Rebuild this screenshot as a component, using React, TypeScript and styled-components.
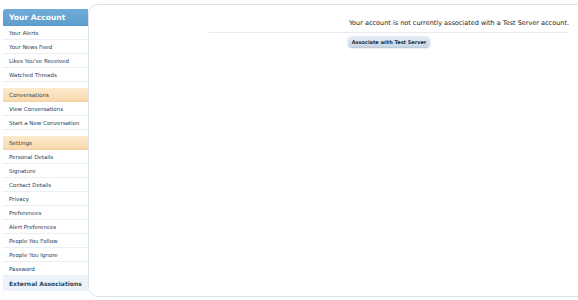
import React from 'react'
import styled, { createGlobalStyle } from 'styled-components'

const GlobalStyle = createGlobalStyle`
  html, body {
    margin: 0;
    padding: 0;
    background: #ffffff;
  }
  body {
    font-family: "DejaVu Sans", "Liberation Sans", sans-serif;
    overflow: hidden;
  }
`

const Page = styled.div`
  display: flex;
  align-items: flex-start;
  width: 578px;
  height: 300px;
  padding: 4px 0 0 3px;
  box-sizing: border-box;
`

const Sidebar = styled.nav`
  width: 85px;
  flex-shrink: 0;
  margin-top: 5px;
  display: flex;
  flex-direction: column;
`

const AccountHeader = styled.div`
  height: 17px;
  display: flex;
  align-items: center;
  padding-left: 6px;
  background: linear-gradient(#70acd8, #5c9ccc);
  border-radius: 3px 0 0 0;
  color: #ffffff;
  font-size: 7.6px;
  font-weight: bold;
  white-space: nowrap;
`

const Group = styled.div<{ $gap?: boolean }>`
  display: flex;
  flex-direction: column;
  margin-top: ${p => (p.$gap ? '6px' : '0')};
`

const SectionHeader = styled.div`
  height: 14px;
  display: flex;
  align-items: center;
  padding-left: 6px;
  background: linear-gradient(#fdebcf, #f8d9ad);
  border-bottom: 1px solid #f3d3a6;
  box-sizing: border-box;
  color: #3c3c3c;
  font-size: 5.6px;
`

const Item = styled.a`
  height: 14px;
  display: flex;
  align-items: center;
  padding-left: 6px;
  border-bottom: 1px solid #e9eff4;
  box-sizing: border-box;
  color: #22405a;
  font-size: 5.5px;
  text-decoration: none;
  white-space: nowrap;
`

const ActiveItem = styled.div`
  height: 15px;
  display: flex;
  align-items: center;
  padding-left: 6px;
  background: #edf3f8;
  color: #2b485c;
  font-size: 6px;
  font-weight: bold;
  white-space: nowrap;
`

const Panel = styled.main`
  flex: 1;
  height: 293px;
  margin-right: -12px;
  border: 1px solid #d6e4ec;
  border-radius: 10px 0 0 10px;
  background: #ffffff;
  box-sizing: border-box;
  padding: 14px 20px 0 120px;
  display: flex;
  flex-direction: column;
  align-items: stretch;
`

const Message = styled.div`
  text-align: right;
  color: #222222;
  font-size: 6.5px;
  padding-bottom: 5px;
  border-bottom: 1px solid #e4ecf2;
`

const ButtonRow = styled.div`
  display: flex;
  justify-content: center;
  padding-top: 3px;
`

const Button = styled.button`
  height: 11px;
  padding: 0 4px;
  border: none;
  border-radius: 4px;
  background: linear-gradient(#e6eef6, #c7d7e7);
  box-shadow: 0 1px 1.5px rgba(80, 110, 140, 0.45);
  color: #1e2c38;
  font-family: "DejaVu Sans", "Liberation Sans", sans-serif;
  font-size: 5px;
  font-weight: bold;
  cursor: pointer;
`

const account = ['Your Alerts', 'Your News Feed', "Likes You've Received", 'Watched Threads']
const conversations = ['View Conversations', 'Start a New Conversation']
const settings = [
  'Personal Details',
  'Signature',
  'Contact Details',
  'Privacy',
  'Preferences',
  'Alert Preferences',
  'People You Follow',
  'People You Ignore',
  'Password',
]

export default function App() {
  return (
    <>
      <GlobalStyle />
      <Page>
        <Sidebar>
          <AccountHeader>Your Account</AccountHeader>
          <Group>
            {account.map(a => <Item key={a}>{a}</Item>)}
          </Group>
          <Group $gap>
            <SectionHeader>Conversations</SectionHeader>
            {conversations.map(a => <Item key={a}>{a}</Item>)}
          </Group>
          <Group $gap>
            <SectionHeader>Settings</SectionHeader>
            {settings.map(a => <Item key={a}>{a}</Item>)}
            <ActiveItem>External Associations</ActiveItem>
          </Group>
        </Sidebar>
        <Panel>
          <Message>Your account is not currently associated with a Test Server account.</Message>
          <ButtonRow>
            <Button>Associate with Test Server</Button>
          </ButtonRow>
        </Panel>
      </Page>
    </>
  )
}
